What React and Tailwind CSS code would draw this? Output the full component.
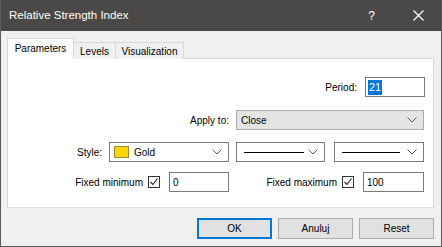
import React from "react";

const Chevron = ({ className = "" }) => (
  <svg width="10" height="6" viewBox="0 0 10 6" className={className}>
    <path d="M0.5 0.5 L5 5 L9.5 0.5" fill="none" stroke="#606060" strokeWidth="1" />
  </svg>
);

const Check = () => (
  <div className="w-[12px] h-[12px] border border-[#333333] bg-white flex items-center justify-center">
    <svg width="10" height="10" viewBox="0 0 10 10">
      <path d="M1.5 5 L4 7.5 L8.5 1.5" fill="none" stroke="#222" strokeWidth="1.1" />
    </svg>
  </div>
);

export default function App() {
  return (
    <div className="w-[442px] h-[247px] bg-[#f0f0f0] border-x border-b border-[#5a5a5a] flex flex-col text-[10px] text-black overflow-hidden font-['Liberation_Sans',Arial,sans-serif]">
      {/* Title bar */}
      <div className="h-[31px] bg-[#4a4947] flex items-center text-white -mx-px shrink-0">
        <span className="ml-[9px] text-[11.5px]">Relative Strength Index</span>
        <span className="ml-auto mr-[38px] text-[12px]">?</span>
        <svg width="11" height="11" viewBox="0 0 11 11" className="mr-[18px]">
          <path d="M0.5 0.5 L10.5 10.5 M10.5 0.5 L0.5 10.5" stroke="#fff" strokeWidth="1.2" />
        </svg>
      </div>

      {/* Tabs */}
      <div className="flex items-end mt-[7px] ml-[6px] h-[21px] relative z-10">
        <div className="h-[21px] w-[67px] bg-white border border-b-0 border-[#d9d9d9] flex items-center justify-center pb-[1px]">
          Parameters
        </div>
        <div className="h-[17px] w-[42px] bg-[#f0f0f0] border border-l-0 border-b-0 border-[#d9d9d9] flex items-center justify-center">
          Levels
        </div>
        <div className="h-[17px] w-[68px] bg-[#f0f0f0] border border-l-0 border-b-0 border-[#d9d9d9] flex items-center justify-center">
          Visualization
        </div>
      </div>

      {/* Panel */}
      <div className="ml-[6px] w-[427px] h-[150px] bg-white border border-[#d9d9d9] -mt-px flex flex-col">
        {/* Period */}
        <div className="mt-[18px] h-[20px] flex items-center justify-end pr-[8px] gap-[8px]">
          <span>Period:</span>
          <div className="w-[60px] h-[20px] border border-[#7a7a7a] flex items-center pl-[2px]">
            <span className="bg-[#0078d7] text-white px-[1px] leading-[15px] text-[11px]">21</span>
          </div>
        </div>
        {/* Apply to */}
        <div className="mt-[13px] h-[20px] grid grid-cols-[221px_195px] items-center">
          <span className="text-right">Apply to:</span>
          <div className="ml-[7px] w-[188px] h-[20px] bg-[#e5e5e5] border border-[#adadad] flex items-center pl-[4px] pr-[6px]">
            <span>Close</span>
            <Chevron className="ml-auto" />
          </div>
        </div>
        {/* Style */}
        <div className="mt-[12px] h-[20px] grid grid-cols-[221px_195px] items-center">
          <div className="flex items-center justify-end gap-[7px]">
            <span>Style:</span>
            <div className="w-[120px] h-[20px] border border-[#7a7a7a] bg-white flex items-center pl-[4px] pr-[6px]">
              <div className="w-[15px] h-[12px] bg-[#ffd700] border border-[#9a8a30]" />
              <span className="ml-[5px]">Gold</span>
              <Chevron className="ml-auto" />
            </div>
          </div>
          <div className="flex items-center">
            <div className="ml-[7px] w-[89px] h-[20px] border border-[#7a7a7a] bg-white flex items-center pl-[7px] pr-[6px]">
              <div className="w-[60px] h-px bg-black" />
              <Chevron className="ml-auto" />
            </div>
            <div className="ml-[9px] w-[90px] h-[20px] border border-[#7a7a7a] bg-white flex items-center pl-[7px] pr-[6px]">
              <div className="w-[58px] h-px bg-black" />
              <Chevron className="ml-auto" />
            </div>
          </div>
        </div>
        {/* Fixed */}
        <div className="mt-[10px] h-[20px] grid grid-cols-[221px_195px] items-center">
          <div className="flex items-center justify-end">
            <span>Fixed minimum</span>
            <div className="ml-[5px]"><Check /></div>
            <div className="ml-[9px] w-[60px] h-[20px] border border-[#7a7a7a] flex items-center pl-[3px]">0</div>
          </div>
          <div className="flex items-center justify-end">
            <span>Fixed maximum</span>
            <div className="ml-[5px]"><Check /></div>
            <div className="ml-[9px] w-[61px] h-[20px] border border-[#7a7a7a] flex items-center pl-[3px]">100</div>
          </div>
        </div>
      </div>

      {/* Buttons */}
      <div className="mt-[10px] flex justify-end pr-[7px] gap-[6px]">
        <div className="w-[75px] h-[21px] bg-[#e1e1e1] border-2 border-[#0078d7] flex items-center justify-center">OK</div>
        <div className="w-[75px] h-[21px] bg-[#e1e1e1] border border-[#adadad] flex items-center justify-center">Anuluj</div>
        <div className="w-[75px] h-[21px] bg-[#e1e1e1] border border-[#adadad] flex items-center justify-center">Reset</div>
      </div>
    </div>
  );
}
